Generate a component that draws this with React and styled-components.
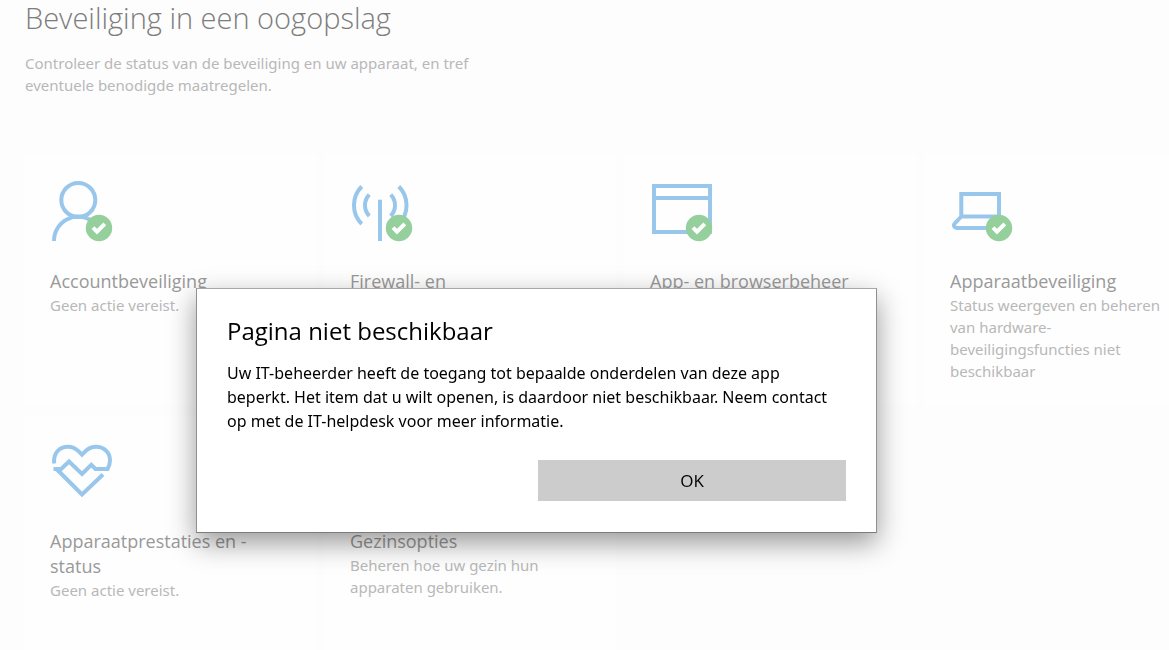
import React from "react";
import styled, { createGlobalStyle } from "styled-components";

const tiles = [
  { icon: "account", checked: true, title: "Accountbeveiliging", text: "Geen actie vereist." },
  { icon: "firewall", checked: true, title: "Firewall- en" },
  { icon: "browser", checked: true, title: "App- en browserbeheer" },
  {
    icon: "device",
    checked: true,
    title: "Apparaatbeveiliging",
    text: "Status weergeven en beheren van hardware-beveiligingsfuncties niet beschikbaar",
  },
  { icon: "health", title: "Apparaatprestaties en -status", text: "Geen actie vereist." },
  { title: "Gezinsopties", text: "Beheren hoe uw gezin hun apparaten gebruiken." },
];

const shapes = {
  account: (
    <>
      <circle cx="27.3" cy="19" r="17" />
      <path d="M3 60A24.3 24 0 0 1 42 40.5" />
    </>
  ),
  firewall: (
    <>
      <path d="M29 18.7V60" />
      <path d="M10.7 5.5A26.6 26.6 0 0 0 10.7 43M47.8 5.5A26.6 26.6 0 0 1 47.8 43" />
      <path d="M18.3 13.7A15.3 15.3 0 0 0 18.3 35M39.7 13.7A15.3 15.3 0 0 1 39.7 35" />
    </>
  ),
  browser: (
    <>
      <rect x="3" y="5" width="56" height="46" />
      <path d="M3 17H59" />
    </>
  ),
  device: (
    <>
      <path d="M10.3 35.5V13H48V35.5Z" />
      <path d="M10.3 35.5L3.8 42.4A2.7 2.7 0 0 0 5.8 47H40" />
    </>
  ),
  health: (
    <>
      <path d="M3.2 22.5C2 11.5 9 5.7 16.7 5.7C21.5 5.7 25 7.6 27.5 10.2L31 13.7L34.5 10.2C37 7.6 40.5 5.7 45.3 5.7C53 5.7 59 11.7 59 19.3C59 22.5 58.2 25.4 56.6 28H44.5L40.3 23.8L31 33L18 20.5L8 30" />
      <path d="M2.5 28H9.5" />
      <path d="M5.5 28L31 53.5L52 33.5" />
    </>
  ),
};

const StatusIcon = ({ name, checked }) => (
  <StyledSvg viewBox="0 0 62 62" aria-hidden="true">
    {shapes[name]}
    {checked && (
      <>
        <Badge cx="48" cy="47" r="13.2" />
        <Check d="M42 46.6L46 50.6L53.8 42.8" />
      </>
    )}
  </StyledSvg>
);

const App = () => (
  <>
    <GlobalStyle />
    <Page>
      <PageTitle>Beveiliging in een oogopslag</PageTitle>
      <Intro>
        Controleer de status van de beveiliging en uw apparaat, en tref eventuele benodigde
        maatregelen.
      </Intro>
      <Tiles>
        {tiles.map(({ icon, checked, title, text }) => (
          <Tile key={title}>
            <StatusIcon name={icon} checked={checked} />
            <TileTitle>{title}</TileTitle>
            {text && <TileText>{text}</TileText>}
          </Tile>
        ))}
      </Tiles>
    </Page>
    <Overlay>
      <Dialog role="dialog" aria-modal="true" aria-labelledby="dialog-title">
        <DialogTitle id="dialog-title">Pagina niet beschikbaar</DialogTitle>
        <DialogText>
          Uw IT-beheerder heeft de toegang tot bepaalde onderdelen van deze app
          <br />
          beperkt. Het item dat u wilt openen, is daardoor niet beschikbaar. Neem contact
          <br />
          op met de IT-helpdesk voor meer informatie.
        </DialogText>
        <Actions>
          <Button type="button">OK</Button>
        </Actions>
      </Dialog>
    </Overlay>
  </>
);

const GlobalStyle = createGlobalStyle`
  * {
    box-sizing: border-box;
  }
  body {
    margin: 0;
    overflow: hidden;
    background-color: #fdfdfd;
    font-family: "Open Sans", "Noto Sans", sans-serif;
  }
`;
const Page = styled.main`
  padding: 1px 0 0 25px;
`;
const PageTitle = styled.h1`
  margin: 0;
  font-size: 29px;
  font-weight: 300;
  line-height: 34px;
  color: #7c7c7c;
`;
const Intro = styled.p`
  max-width: 480px;
  margin: 17px 0 59px;
  font-family: "Noto Sans", sans-serif;
  font-size: 15px;
  line-height: 22px;
  color: #b8b8b8;
`;
const Tiles = styled.div`
  display: grid;
  grid-template-columns: repeat(4, 292px);
  gap: 10px 8px;
`;
const Tile = styled.section`
  min-height: 250px;
  padding: 26px 50px 20px 25px;
  background-color: #fefefe;
`;
const StyledSvg = styled.svg`
  display: block;
  width: 62px;
  height: 62px;
  margin: 0 1px 26px;
  fill: none;
  stroke: #99c7ec;
  stroke-width: 4;
`;
const Badge = styled.circle`
  fill: #94cf9c;
  stroke: none;
`;
const Check = styled.path`
  stroke: #fff;
`;
const TileTitle = styled.h2`
  margin: 0;
  font-size: 18px;
  font-weight: 400;
  line-height: 25px;
  color: #999;
`;
const TileText = styled.p`
  margin: 0;
  font-family: "Noto Sans", sans-serif;
  font-size: 15px;
  line-height: 22px;
  color: #b8b8b8;
`;
const Overlay = styled.div`
  position: fixed;
  inset: 0;
  display: flex;
  justify-content: center;
  align-items: flex-start;
  padding: 288px 96px 0 0;
`;
const Dialog = styled.div`
  width: 681px;
  padding: 26px 30px 31px;
  border: 1px solid;
  border-color: #a8a8a8 #909090 #7c7c7c;
  background-color: #fff;
  box-shadow: 0 10px 26px rgba(0, 0, 0, 0.4);
`;
const DialogTitle = styled.h2`
  margin: 0 0 14px;
  font-size: 24px;
  font-weight: 400;
  line-height: 32px;
  color: #000;
`;
const DialogText = styled.p`
  margin: 0 0 27px;
  font-family: "Noto Sans", sans-serif;
  font-size: 16px;
  line-height: 24px;
  color: #000;
`;
const Actions = styled.div`
  display: flex;
  justify-content: flex-end;
`;
const Button = styled.button`
  width: 308px;
  height: 41px;
  padding: 0;
  border: none;
  background-color: #ccc;
  font-family: inherit;
  font-size: 17px;
  color: #000;
`;

export default App;
